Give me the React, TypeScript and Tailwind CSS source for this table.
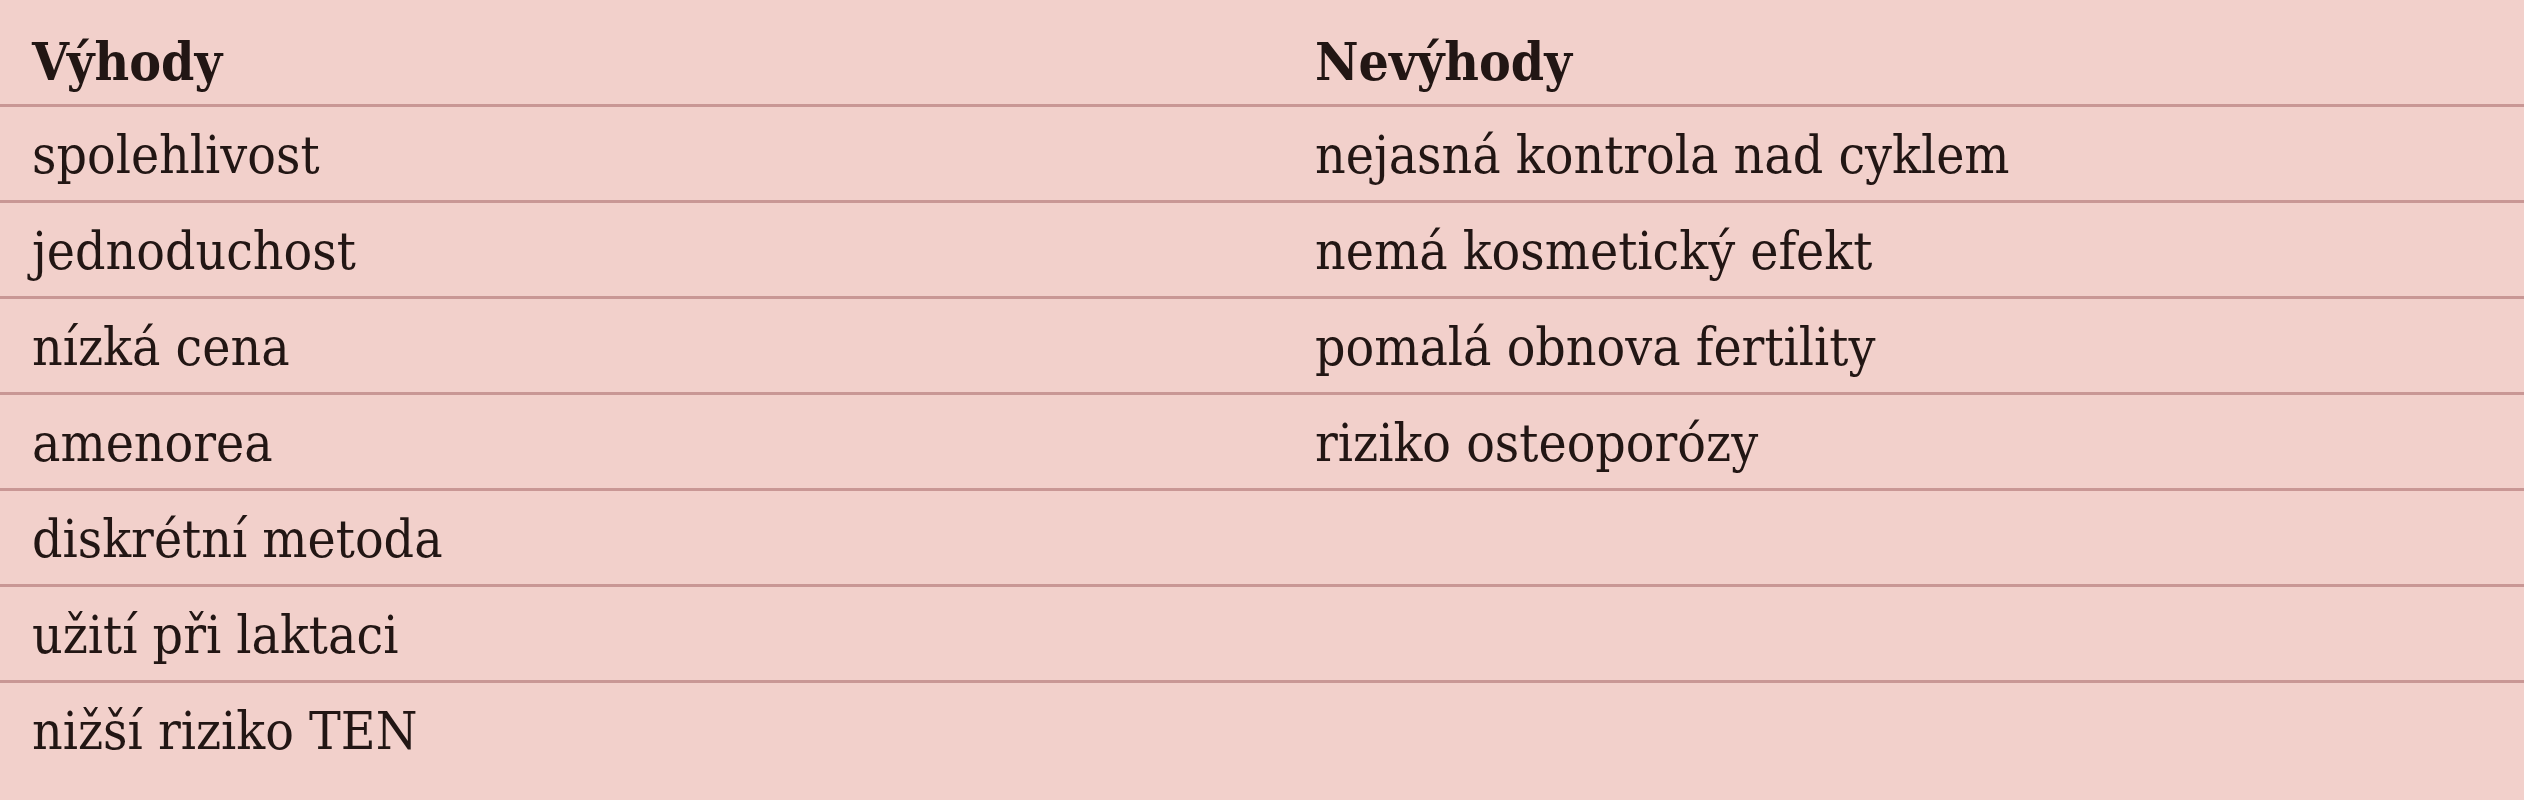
const rows: [string, string][] = [
  ['spolehlivost', 'nejasná kontrola nad cyklem'],
  ['jednoduchost', 'nemá kosmetický efekt'],
  ['nízká cena', 'pomalá obnova fertility'],
  ['amenorea', 'riziko osteoporózy'],
  ['diskrétní metoda', ''],
  ['užití při laktaci', ''],
  ['nižší riziko TEN', ''],
]

const font = {
  fontFamily: '"DejaVu Serif Condensed", "DejaVu Serif", "Liberation Serif", serif',
}

export default function App() {
  return (
    <div
      className="h-[800px] w-full overflow-hidden bg-[#f2d0cb] text-[53px] leading-[52px] text-[#221614] font-stretch-condensed"
      style={font}
    >
      <div className="grid h-[107px] grid-cols-[1283px_1fr] border-b-[3px] border-[#c99795] pt-[35px] font-bold">
        <div className="pl-8">Výhody</div>
        <div className="pl-8">Nevýhody</div>
      </div>
      {rows.map(([a, b], i) => (
        <div
          key={a}
          className={
            i === rows.length - 1
              ? 'grid h-[96px] grid-cols-[1283px_1fr] pt-[22px]'
              : 'grid h-[96px] grid-cols-[1283px_1fr] border-b-[3px] border-[#c99795] pt-[22px]'
          }
        >
          <div className="pl-8">{a}</div>
          <div className="pl-8">{b}</div>
        </div>
      ))}
    </div>
  )
}
